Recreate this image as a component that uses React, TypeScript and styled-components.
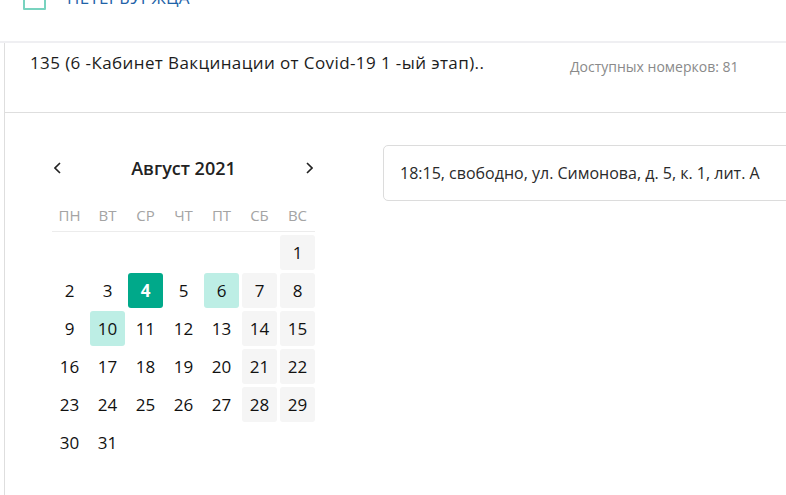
import React from "react";
import styled, { createGlobalStyle } from "styled-components";

const Global = createGlobalStyle`
  html, body { margin: 0; padding: 0; background: #fff; overflow: hidden; }
  body { font-family: "Open Sans", "Noto Sans", sans-serif; color: #222; }
`;

const Page = styled.div`
  width: 786px;
  height: 495px;
  overflow: hidden;
  display: flex;
  flex-direction: column;
`;

const TopBar = styled.div`
  overflow: hidden;
  border-bottom: 2px solid #efeff2;
  box-sizing: border-box;
  height: 43px;
`;

const TopRow = styled.div`
  display: flex;
  align-items: flex-end;
  gap: 21px;
  padding-left: 23px;
  margin-top: -16px;
`;

const Check = styled.div`
  width: 23px;
  height: 26px;
  box-sizing: border-box;
  border: 2px solid #78d3bf;
  border-radius: 1px;
`;

const TopTitle = styled.div`
  font-size: 17px;
  line-height: 24px;
  color: #1f63a8;
  letter-spacing: 0.3px;
  text-transform: uppercase;
`;

const Panel = styled.div`
  margin-left: 4px;
  width: 1000px;
  flex: 1;
  border-left: 1px solid #dedede;
  display: flex;
  flex-direction: column;
`;

const PanelHead = styled.div`
  height: 70px;
  box-sizing: border-box;
  border-bottom: 1px solid #dedede;
  display: flex;
  align-items: flex-start;
  padding: 9px 0 0 25px;
`;

const Title = styled.div`
  width: 540px;
  font-size: 17px;
  letter-spacing: 0.4px;
  line-height: 22px;
  color: #1c1c1c;
`;

const Available = styled.div`
  font-size: 14px;
  line-height: 20px;
  color: #8a8a8a;
  padding-top: 5px;
`;

const Body = styled.div`
  display: flex;
  align-items: flex-start;
  padding: 32px 0 0 47px;
`;

const Calendar = styled.div`
  margin-top: 11px;
  width: 263px;
  display: flex;
  flex-direction: column;
`;

const CalHeader = styled.div`
  height: 24px;
  display: flex;
  align-items: center;
  justify-content: space-between;
  padding: 0 1px;
`;

const NavButton = styled.button`
  border: 0;
  background: none;
  padding: 0;
  width: 8px;
  height: 24px;
  display: flex;
  align-items: center;
  justify-content: center;
  cursor: pointer;
`;

const Month = styled.div`
  font-size: 18px;
  font-weight: 600;
  color: #222;
  line-height: 24px;
`;

const Grid = styled.div`
  display: grid;
  grid-template-columns: repeat(7, 35px);
  column-gap: 3px;
  row-gap: 3px;
`;

const WeekGrid = styled(Grid)`
  margin-top: 25px;
  padding-bottom: 6px;
  border-bottom: 1px solid #ececec;
  margin-bottom: 3px;
`;

const WeekDay = styled.div`
  text-align: center;
  font-size: 15px;
  line-height: 20px;
  color: #a4a4a4;
`;

type Kind = "plain" | "weekend" | "avail" | "selected" | "empty";

const Day = styled.div<{ $kind: Kind }>`
  height: 35px;
  border-radius: 3px;
  display: flex;
  align-items: center;
  justify-content: center;
  font-size: 17px;
  color: ${(p) => (p.$kind === "selected" ? "#fff" : "#111")};
  font-weight: ${(p) => (p.$kind === "selected" ? 700 : 400)};
  background: ${(p) =>
    p.$kind === "selected"
      ? "#00a98a"
      : p.$kind === "avail"
      ? "#bdeee5"
      : p.$kind === "weekend"
      ? "#f5f5f5"
      : "transparent"};
`;

const Slot = styled.div`
  margin-left: 68px;
  width: 480px;
  height: 56px;
  box-sizing: border-box;
  border: 1px solid #dcdcdc;
  border-radius: 5px;
  display: flex;
  align-items: center;
  padding-left: 16px;
  font-size: 16px;
  color: #2a2a2a;
`;

const Chevron = ({ dir }: { dir: "left" | "right" }) => (
  <svg width="7" height="12" viewBox="0 0 7 12">
    <polyline
      points={dir === "left" ? "6,1 1,6 6,11" : "1,1 6,6 1,11"}
      fill="none"
      stroke="#222"
      strokeWidth="1.6"
    />
  </svg>
);

const weekDays = ["ПН", "ВТ", "СР", "ЧТ", "ПТ", "СБ", "ВС"];

export default function App() {
  const cells: { n: number | null; kind: Kind }[] = [];
  for (let i = 0; i < 6; i++) cells.push({ n: null, kind: "empty" });
  for (let d = 1; d <= 31; d++) {
    const col = (d + 5) % 7;
    let kind: Kind = col >= 5 ? "weekend" : "plain";
    if (d === 30 || d === 31) kind = "plain";
    if (d === 4) kind = "selected";
    if (d === 6 || d === 10) kind = "avail";
    cells.push({ n: d, kind });
  }
  return (
    <Page>
      <Global />
      <TopBar>
        <TopRow>
          <Check />
          <TopTitle>Петербуржца</TopTitle>
        </TopRow>
      </TopBar>
      <Panel>
        <PanelHead>
          <Title>135 (6 -Кабинет Вакцинации от Covid-19 1 -ый этап)..</Title>
          <Available>Доступных номерков: 81</Available>
        </PanelHead>
        <Body>
          <Calendar>
            <CalHeader>
              <NavButton aria-label="prev">
                <Chevron dir="left" />
              </NavButton>
              <Month>Август 2021</Month>
              <NavButton aria-label="next">
                <Chevron dir="right" />
              </NavButton>
            </CalHeader>
            <WeekGrid>
              {weekDays.map((w) => (
                <WeekDay key={w}>{w}</WeekDay>
              ))}
            </WeekGrid>
            <Grid>
              {cells.map((c, i) => (
                <Day key={i} $kind={c.kind}>
                  {c.n}
                </Day>
              ))}
            </Grid>
          </Calendar>
          <Slot>18:15, свободно, ул. Симонова, д. 5, к. 1, лит. А</Slot>
        </Body>
      </Panel>
    </Page>
  );
}
